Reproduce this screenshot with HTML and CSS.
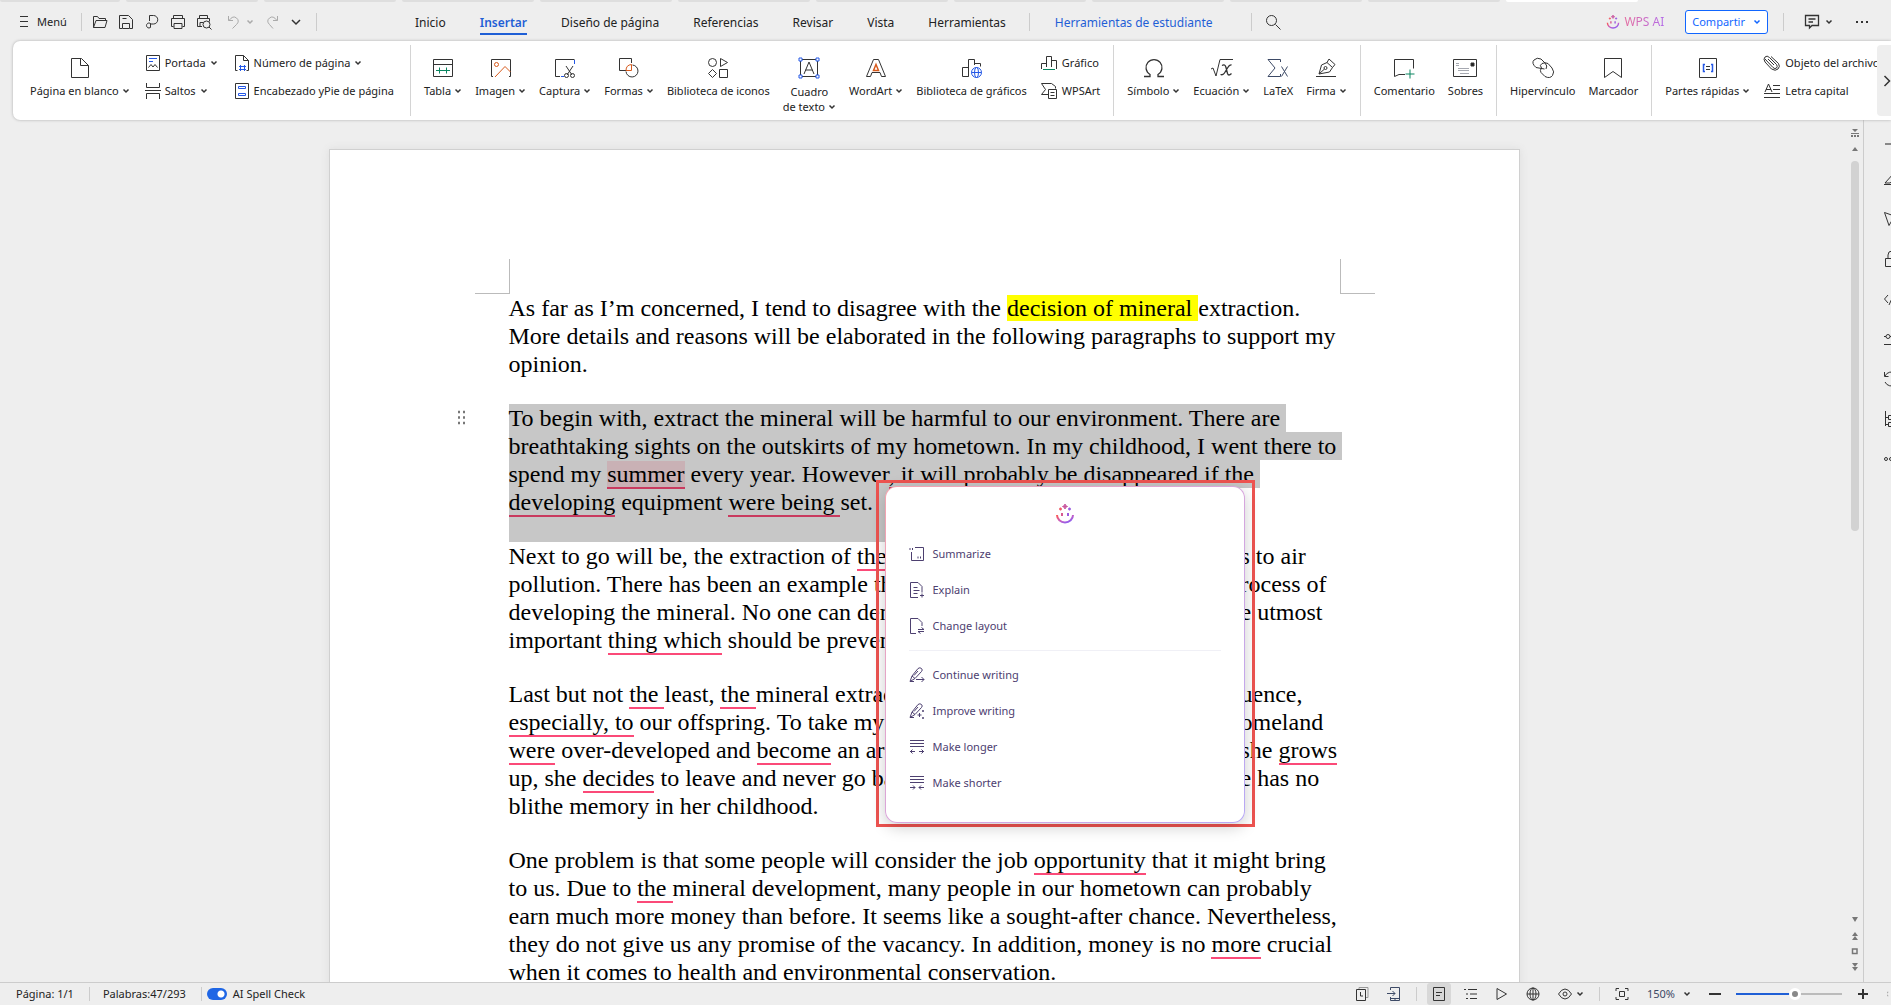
FILE: index.html
```
<!DOCTYPE html>
<html lang="es">
<head>
<meta charset="UTF-8">
<title>WPS Writer</title>
<link rel="stylesheet" href="styles.css">
</head>
<body>
<!-- shared icons -->
<svg class="defs" width="0" height="0">
    <defs>
        <linearGradient id="ai" x1="0" y1="0" x2="1" y2="1">
            <stop offset="0" stop-color="#ff5a4f"/>
            <stop offset=".5" stop-color="#c65fc4"/>
            <stop offset="1" stop-color="#7a5cff"/>
        </linearGradient>
        <symbol id="caret" viewBox="0 0 8 8"><path d="M1.5 2.5L4 5l2.5-2.5" fill="none" stroke="currentColor" stroke-width="1.5"/></symbol>
        <symbol id="smile" viewBox="0 0 20 20">
            <path d="M2 11a8 7.500 0 0 0 16 0" fill="none" stroke="url(#ai)" stroke-width="2"/>
            <path d="M7 9v3" stroke="#d75a90" stroke-width="2"/>
            <path d="M13 9v3" stroke="#9c5ce0" stroke-width="2"/>
            <path d="M10 0l.8 1.700 1.700.8-1.700.8L10 5l-.8-1.700-1.700-.8 1.700-.8z" fill="#c9589f" stroke="#c9589f"/>
            <path d="M5.500 3.500v3M4 5h3" stroke="#f25d68" stroke-width="1.300"/>
            <path d="M14.500 3.500v3M13 5h3" stroke="#9a5fe0" stroke-width="1.300"/>
        </symbol>
        <symbol id="pen" viewBox="0 0 16 16"><path d="M1 14.500l2-5.500 6-7.500q2-1.500 3.500 0t0 3L6 11.500zM3 9l3 2.500M1 14.500h4M5 8.500l4-4.500"/></symbol>
    </defs>
</svg>

<div class="file-tabs">
    <i></i><i></i><i></i><i></i><i></i><i></i><i></i><i></i><i></i><i></i><i></i><i class="on"></i>
</div>

<header class="menubar">
    <div class="quick">
        <button class="menu"><svg width="10" height="12" viewBox="0 0 10 12"><path d="M1 .5h8M1 5.500h8M1 10.500h8"/></svg>Menú</button>
        <span class="sep"></span>
        <button aria-label="Abrir"><svg width="16" height="16" viewBox="0 0 16 16"><path d="M1.500 13.500v-11h4l1.500 2h6.500v2M1.500 13.500l2.500-7h11l-2 7z"/></svg></button>
        <button aria-label="Guardar"><svg width="16" height="16" viewBox="0 0 16 16"><path d="M4 14.500H1.500v-13h9l4 4v9H12M4.500 14.500v-5h7v5zM4.500 4.500h4"/></svg></button>
        <button aria-label="Exportar"><svg width="16" height="16" viewBox="0 0 16 16"><path d="M5.500 7V1.500h4a4 4 0 0 1 0 8.500H7a2.500 2.500 0 1 0-2 4l1.500-.5v-3.500"/></svg></button>
        <button aria-label="Imprimir"><svg width="16" height="16" viewBox="0 0 16 16"><path d="M3.500 4.500v-3h9v3M3.500 12.500h-2v-8h13v8h-2M4 9.500h8v5H4z"/></svg></button>
        <button aria-label="Vista previa"><svg width="16" height="16" viewBox="0 0 16 16"><path d="M3.500 4.500v-3h8v3M6 12.500H1.500v-8h12v3M4 12.500v-4h3"/><circle cx="10.500" cy="10.500" r="3.500"/><path d="M13 13l2.500 2.500"/></svg></button>
        <button class="off undo" aria-label="Deshacer"><svg width="14" height="16" viewBox="0 0 14 16"><path d="M2.500 2v4.500h4.500M3 6.500Q7 1 10.500 4t0 6.500L6.500 14.500"/></svg><svg class="caret"><use href="#caret"/></svg></button>
        <button class="off" aria-label="Rehacer"><svg width="14" height="16" viewBox="0 0 14 16"><path d="M11.500 2v4.500H7M11 6.500Q7 1 3.500 4t0 6.500L7 14.500"/></svg></button>
        <button aria-label="Más"><svg width="12" height="12" viewBox="0 0 12 12"><path d="M2 4l4 4 4-4" stroke-width="1.500"/></svg></button>
        <span class="sep last"></span>
    </div>
    <nav class="tabs">
        <a href="#">Inicio</a>
        <a href="#" class="active">Insertar</a>
        <a href="#">Diseño de página</a>
        <a href="#">Referencias</a>
        <a href="#">Revisar</a>
        <a href="#">Vista</a>
        <a href="#">Herramientas</a>
        <span class="sep"></span>
        <a href="#" class="student">Herramientas de estudiante</a>
        <span class="sep"></span>
        <button aria-label="Buscar"><svg width="18" height="18" viewBox="0 0 18 18"><circle cx="7.500" cy="7.500" r="5"/><path d="M11.500 11.500l5 5"/></svg></button>
    </nav>
    <div class="right">
        <button class="wpsai"><svg width="14" height="14"><use href="#smile"/></svg><span>WPS AI</span></button>
        <button class="share">Compartir <svg class="caret"><use href="#caret"/></svg></button>
        <span class="sep"></span>
        <button class="comments" aria-label="Comentarios"><svg width="16" height="16" viewBox="0 0 16 16"><path d="M1.500 1.500h13v10H8l-2.500 2.500v-2.500h-4zM4.500 5h7M4.500 8h4.500" stroke-width="1.300"/></svg><svg class="caret"><use href="#caret"/></svg></button>
        <button aria-label="Más opciones"><svg width="14" height="4" viewBox="0 0 14 4"><path d="M1 2h2M6 2h2M11 2h2" stroke-width="2"/></svg></button>
    </div>
</header>

<section class="ribbon">
    <button class="big"><svg width="24" height="24" viewBox="0 0 24 24"><path d="M3.500 2.500h10l7 7v12h-17zM12.500 2.500v7h8"/></svg><span>Página en blanco<svg class="caret"><use href="#caret"/></svg></span></button>
    <div class="stack">
        <button><svg width="16" height="18" viewBox="0 0 16 18"><path d="M1.500 1.500h13v15h-13z"/><path class="blue" d="M4 4.500h8M4 7.500h4"/><path d="M3.500 13.500l2.500-3 2 2.500 2-2.500 2.500 3"/></svg>Portada<svg class="caret"><use href="#caret"/></svg></button>
        <button><svg width="16" height="18" viewBox="0 0 16 18"><path d="M1.500 1v4.500h13V1M0 8.500h16M1.500 17v-5.500h13V17"/></svg>Saltos<svg class="caret"><use href="#caret"/></svg></button>
    </div>
    <div class="stack">
        <button><svg width="16" height="18" viewBox="0 0 16 18"><path d="M3.500 16.500h-2v-15h8l5 5v10h-2M9.500 1.500v5h5"/><path class="blue" d="M6.500 11v6M10.500 11v6M5 12.500h7M5 15.500h7"/></svg>Número de página<svg class="caret"><use href="#caret"/></svg></button>
        <button><svg width="16" height="18" viewBox="0 0 16 18"><path d="M1.500 1.500h13v15h-13z"/><path class="blue" d="M4.500 4.500h7v2h-7zM4.500 11.500h7v2h-7z"/></svg>Encabezado yPie de página</button>
    </div>
    <span class="bar"></span>

    <button class="big"><svg width="24" height="24" viewBox="0 0 24 24"><path d="M2.500 3.500h19v17h-19zM2.500 8.500h19"/><path class="green" d="M5 14.500h14M8.500 11.500v6M15.500 11.500v6"/></svg><span>Tabla<svg class="caret"><use href="#caret"/></svg></span></button>
    <button class="big"><svg width="24" height="24" viewBox="0 0 24 24"><path d="M4 20.500H2.500v-17h19v17H20"/><circle class="orange" cx="7.500" cy="8.500" r="2"/><path class="orange" d="M6 21l10-10.500 5.500 5.500"/></svg><span>Imagen<svg class="caret"><use href="#caret"/></svg></span></button>
    <button class="big"><svg width="24" height="24" viewBox="0 0 24 24"><path d="M7 20.500H2.500v-17h19M13 10l6 9M20 10l-6 9"/><path class="blue" d="M21.500 4v4M8 20.500h3"/><circle cx="13.500" cy="19.500" r="2"/><circle cx="19.500" cy="19.500" r="2"/></svg><span>Captura<svg class="caret"><use href="#caret"/></svg></span></button>
    <button class="big"><svg width="24" height="24" viewBox="0 0 24 24"><path d="M9 14.500H2.500v-12h12V7"/><path d="M15.500 9a6 6 0 1 1-6.500 6.500"/><path class="orange" d="M14.500 8.500v6H9q0-5.500 5.500-6z"/></svg><span>Formas<svg class="caret"><use href="#caret"/></svg></span></button>
    <button class="big"><svg width="24" height="24" viewBox="0 0 24 24"><circle cx="6.500" cy="6.500" r="4"/><path d="M14.500 2.500v8l7-4zM6.500 13.500l4 4-4 4-4-4zM13.500 13.500h8v8h-8z"/></svg><span>Biblioteca de iconos</span></button>
    <button class="big two"><svg width="24" height="24" viewBox="0 0 24 24"><path d="M5 3.500h14M5 20.500h14M3.500 5v14M20.500 5v14M7 18l5-12 5 12M8.500 14h7"/><path class="blue" d="M2 2h3v3H2zM19 2h3v3h-3zM2 19h3v3H2zM19 19h3v3h-3z"/></svg><span>Cuadro<br>de texto<svg class="caret"><use href="#caret"/></svg></span></button>
    <button class="big"><svg width="24" height="24" viewBox="0 0 24 24"><path d="M2.500 20.500l7-17h5l7 17h-4l-1.500-4H8l-1.500 4z"/><path class="orange" d="M12 8.500l2.500 6h-5z" stroke-width="1.500"/></svg><span>WordArt<svg class="caret"><use href="#caret"/></svg></span></button>
    <button class="big"><svg width="24" height="24" viewBox="0 0 24 24"><path d="M8.500 20.500h-6v-9h6zM8.500 20.500v-17h6V9M14.500 7.500h6v3"/><g class="blue"><circle cx="16.500" cy="16.500" r="5"/><ellipse cx="16.500" cy="16.500" rx="2" ry="5"/><path d="M11.500 16.500h10"/></g></svg><span>Biblioteca de gráficos</span></button>
    <div class="stack charts">
        <button><svg width="18" height="18" viewBox="0 0 18 18"><path d="M1.500 15V9.500h5M6.500 13V2.500h5V13M11.500 6.500h5V15"/><path class="green" d="M3 15.500h12"/></svg>Gráfico</button>
        <button><svg width="18" height="18" viewBox="0 0 18 18"><path d="M8 12.500H1.500l4-5-4-6h10l4 3v2M8.500 7.500h8v9h-8zM10.500 10.500h4M10.500 13.500h4"/></svg>WPSArt</button>
    </div>
    <span class="bar"></span>

    <button class="big"><svg width="24" height="24" viewBox="0 0 24 24"><path d="M2 20.500h6v-2a8 8 0 1 1 8 0v2h6" stroke-width="1.300"/></svg><span>Símbolo<svg class="caret"><use href="#caret"/></svg></span></button>
    <button class="big"><svg width="24" height="24" viewBox="0 0 24 24"><path d="M1 13l2-1 3 8 4-16.500h13"/><path d="M12 9.500q3-2 4 2l1.500 6q1 3 4 0M21.500 9q-2-.5-4 3l-3 5q-1.500 2.500-4 1.500" stroke-width="1.300"/></svg><span>Ecuación<svg class="caret"><use href="#caret"/></svg></span></button>
    <button class="big"><svg width="24" height="24" viewBox="0 0 24 24"><path d="M14.500 6V3.500H2l7 8.500-7 8.500h12.500V18M15.500 10.500l6 10M21.500 10.500l-6 10" stroke="#3d4a66"/></svg><span>LaTeX</span></button>
    <button class="big"><svg width="24" height="24" viewBox="0 0 24 24"><path d="M2 20.500h20M5 18l2.500-9 5.500-2.500 5.500 5L15.500 16zM5 18l5.500-5M13 6.500l2-3.500 6 5.500-2.500 3"/><circle cx="11.500" cy="12" r="1.500"/></svg><span>Firma<svg class="caret"><use href="#caret"/></svg></span></button>
    <span class="bar"></span>

    <button class="big"><svg width="24" height="24" viewBox="0 0 24 24"><path d="M13 18.500H7l-4.500 2v-17h19v9"/><path class="green" d="M18 13.500v9M13.500 18h9"/></svg><span>Comentario</span></button>
    <button class="big"><svg width="26" height="24" viewBox="0 0 26 24"><path d="M1.500 3.500h23v17h-23z"/><path d="M4 7.500h3M4 9.500h3M6 12.500h11M6 14.500h11M8 17.500h9" stroke="#a5a8b0"/><path d="M19 7h3v3h-3z" fill="#222"/></svg><span>Sobres</span></button>
    <span class="bar"></span>

    <button class="big"><svg width="24" height="24" viewBox="0 0 24 24"><path d="M13.500 13L5 11.500Q0 7 3 4t7-1l4 4q3 3 1 6M10.500 12Q8 9 11 7.500t6 0l4 4.500q3 4 .5 7.500t-7.500 1l-4-4q-1.500-2 .5-4.500"/></svg><span>Hipervínculo</span></button>
    <button class="big"><svg width="24" height="24" viewBox="0 0 24 24"><path d="M3.500 2.500h17v19L12 15.500l-8.500 6z"/></svg><span>Marcador</span></button>
    <span class="bar"></span>

    <button class="big"><svg width="24" height="24" viewBox="0 0 24 24"><path d="M3.500 2.500h17v19h-17z"/><path class="blue" d="M9 8.500H7.500v7H9M15 8.500h1.500v7H15" stroke-width="1.500"/><path d="M10 10.500h4M10 13.500h4"/></svg><span>Partes rápidas<svg class="caret"><use href="#caret"/></svg></span></button>
    <div class="stack cut">
        <button><svg width="18" height="18" viewBox="0 0 18 18"><path d="M2 5l8 8.500q2 2 3.500.5t0-3.500L6.500 3.500Q4 1 2 3t0 5l6.500 7q4 2.500 6.500 0t.5-5.500L8 2.500M5 5l6 6"/></svg>Objeto del archivo</button>
        <button><svg width="18" height="18" viewBox="0 0 18 18"><path d="M2 10l3.500-8L9 10M3 7.500h5M10 3.500h7M10 7.500h7M1 11.500h16M1 15.500h16"/></svg>Letra capital</button>
    </div>
    <button class="scroll-right" aria-label="Más herramientas"><svg width="8" height="12" viewBox="0 0 8 12"><path d="M1.500 1L6.500 6l-5 5" stroke-width="1.500"/></svg></button>
</section>

<main class="work">
    <div class="canvas">
        <article class="page">
            <div class="corners"><i></i><i></i></div>
            <p>
                <span class="line">As far as I’m concerned, I tend to disagree with the <mark>decision of mineral </mark>extraction.</span>
                <span class="line">More details and reasons will be elaborated in the following paragraphs to support my</span>
                <span class="line">opinion.</span>
            </p>
            <p class="selected">
                <button class="grip" aria-label="Mover párrafo"><svg width="10" height="16" viewBox="0 0 10 16"><path d="M1 2h2M6 2h2M1 7.500h2M6 7.500h2M1 13h2M6 13h2" stroke-width="2.500"/></svg></button>
                <span class="line">To begin with, extract the mineral will be harmful to our environment. There are </span>
                <span class="line">breathtaking sights on the outskirts of my hometown. In my childhood, I went there to </span>
                <span class="line">spend my <u class="word">summer</u> every year. However<u>, it</u> will probably <u>be disappeared if</u> the </span>
                <span class="line end"><u>developing</u> equipment <u>were being </u>set.</span>
            </p>
            <p>
                <span class="line split"><span>Next to go will be, the extraction of <u>the mineral</u></span><span>s to air</span></span>
                <span class="line split"><span>pollution. There has been an example that</span><span>rocess of</span></span>
                <span class="line split"><span>developing the mineral. No one can deny</span><span>e utmost</span></span>
                <span class="line">important <u>thing which</u> should be prevented.</span>
            </p>
            <p>
                <span class="line split"><span>Last but not <u>the </u>least, <u>the </u>mineral extraction</span><span>uence,</span></span>
                <span class="line split"><span><u>especially, to</u> our offspring. To take my</span><span>omeland</span></span>
                <span class="line split"><span><u>were</u> over-developed and <u>become</u> an area</span><span>she <u>grows</u></span></span>
                <span class="line split"><span>up, she <u>decides</u> to leave and never go back</span><span>e has no</span></span>
                <span class="line">blithe memory in her childhood.</span>
            </p>
            <p>
                <span class="line">One problem is that some people will consider the job <u>opportunity</u> that it might bring</span>
                <span class="line">to us. Due to <u>the </u>mineral development, many people in our hometown can probably</span>
                <span class="line">earn much more money than before. It seems like a sought-after chance. Nevertheless,</span>
                <span class="line">they do not give us any promise of the vacancy. In addition, money is no <u>more</u> crucial</span>
                <span class="line">when it comes to health and environmental conservation.</span>
            </p>

            <div class="frame">
                <div class="ai-menu">
                    <svg class="logo" width="20" height="20"><use href="#smile"/></svg>
                    <button><svg width="16" height="16" viewBox="0 0 16 16"><path d="M6 1.500h8.500v13h-12V6M1 2v2M3.500 2v2M9 10.500v2M11.500 10.500v2"/></svg>Summarize</button>
                    <button><svg width="16" height="16" viewBox="0 0 16 16"><path d="M9 15.500H1.500V.5H9l4 4v6M4.500 5.500h4M4.500 8.500h6M4.500 11.500h4M13 11.500v4M11 13.500h4"/></svg>Explain</button>
                    <button><svg width="16" height="16" viewBox="0 0 16 16"><path d="M7 15.500H1.500V.5H9l4 4V8M9 11.500h6L12.500 9.500M15 13.500H9l2.500 2"/></svg>Change layout</button>
                    <hr>
                    <button><svg width="16" height="16" viewBox="0 0 16 16"><use href="#pen"/><path d="M7 12.500h8M12.500 10l2.500 2.500-2.500 2.500"/></svg>Continue writing</button>
                    <button><svg width="16" height="16" viewBox="0 0 16 16"><use href="#pen"/><path d="M10.500 10v4M8.500 12h4M14 7v2M13 8h2M14 14v2M13 15h2"/></svg>Improve writing</button>
                    <button><svg width="16" height="16" viewBox="0 0 16 16"><path d="M1 1.500h14M1 4.500h14M1 7.500h14M1 12.500h5M10 12.500h5M3.500 10.500l-2 2 2 2M12.500 10.500l2 2-2 2"/></svg>Make longer</button>
                    <button><svg width="16" height="16" viewBox="0 0 16 16"><path d="M1 1.500h14M1 4.500h14M1 7.500h14M1 12.500h5M10 12.500h5M4 10.500l2 2-2 2M12 10.500l-2 2 2 2"/></svg>Make shorter</button>
                </div>
            </div>
        </article>
    </div>
    <div class="scroller">
        <svg width="8" height="24" viewBox="0 0 8 24"><path d="M1 0h6L4 3zM0 4h8v1H0zM0 6h2v2H0zM3 6h2v2H3zM6 6h2v2H6zM4 18l3 4H1z"/></svg>
        <i class="thumb"></i>
        <svg class="bottom" width="8" height="56" viewBox="0 0 8 56"><path d="M1 0h6L4 5zM4 15l3 4H1zM4 19l3 4H1zM1 46h6L4 50zM1 50h6L4 54z"/><path d="M1.500 32h4.500v4.500H1.500z" fill="none" stroke="#777" stroke-width="1.500"/></svg>
    </div>
    <aside class="side">
        <svg width="16" height="6" viewBox="0 0 16 6"><path d="M1 3h14" stroke="#888" stroke-width="2"/></svg>
        <svg width="16" height="16" viewBox="0 0 16 16"><path d="M0 13.500h16M1 12L10 2l4 4-8 6z"/></svg>
        <svg width="16" height="16" viewBox="0 0 16 16"><path d="M.5 1.500l14 5-6 2-3.500 6z"/></svg>
        <svg width="16" height="16" viewBox="0 0 16 16"><path d="M1.500 7.500h13v8h-13zM4 7V4a4 4 0 0 1 8 0v3"/></svg>
        <svg width="16" height="16" viewBox="0 0 16 16"><path d="M4 4L.5 8 4 12M10 3L5 14M12 4l3.500 4-3.500 4"/></svg>
        <svg width="16" height="16" viewBox="0 0 16 16"><path d="M0 5.500h2M6 5.500h10M0 13.500h16"/><circle cx="4" cy="5.500" r="2"/></svg>
        <svg width="16" height="16" viewBox="0 0 16 16"><path d="M.5 1v4.500h4M1 5a7 7 0 1 1 0 6"/></svg>
        <svg width="16" height="16" viewBox="0 0 16 16"><path d="M1.500 0v15M1.500 6.500h3M1.500 13.500h3M4.500 4.500h8v4h-8zM4.500 11.500h8v4h-8z"/></svg>
        <svg width="16" height="16" viewBox="0 0 16 16"><circle cx="2" cy="8" r="1.500"/><circle cx="7" cy="8" r="1.500"/><circle cx="12" cy="8" r="1.500"/></svg>
    </aside>
</main>

<footer class="status">
    <span class="page-no">Página: 1/1</span>
    <span class="sep"></span>
    <span class="words">Palabras:47/293</span>
    <span class="sep"></span>
    <label><input type="checkbox" class="switch" checked>AI Spell Check</label>
    <div class="views">
        <button aria-label="Historial"><svg width="14" height="14" viewBox="0 0 14 14"><path d="M4 2.500v-2h9v10h-2" stroke="#999"/><path d="M1.500 2.500h9v11h-9zM5.500 5v4H8"/></svg></button>
        <button class="phone" aria-label="Enviar a móvil"><svg width="14" height="16" viewBox="0 0 14 16"><path d="M3.500 4V1.500h9v13h-9V11M0 7.500h8M5.500 5L8 7.500 5.500 10M3.500 12.500h9M7 14h2" stroke="#3d4a66"/></svg></button>
        <span class="sep"></span>
        <button class="on" aria-label="Página"><svg width="12" height="14" viewBox="0 0 12 14"><path d="M.5.5h11v13H.5zM3 5.500h6M3 8.500h4"/></svg></button>
        <button aria-label="Esquema"><svg width="14" height="12" viewBox="0 0 14 12"><path d="M0 1.500h2M4 1.500h9M2 6h2M6 6h7M2 10.500h2M6 10.500h7"/></svg></button>
        <button aria-label="Reproducir"><svg width="12" height="14" viewBox="0 0 12 14"><path d="M1 1.500l9.500 5.500L1 12.500z"/></svg></button>
        <button aria-label="Web"><svg width="14" height="14" viewBox="0 0 14 14"><circle cx="7" cy="7" r="6"/><ellipse cx="7" cy="7" rx="3" ry="6"/><path d="M1 7h12M7 1v12"/></svg></button>
        <button class="eye" aria-label="Protección"><svg width="14" height="12" viewBox="0 0 14 12"><path d="M.5 6Q3.500 1 7 1t6.500 5Q10.500 11 7 11T.5 6z"/><circle cx="7" cy="6" r="2"/></svg><svg class="caret"><use href="#caret"/></svg></button>
        <span class="sep"></span>
        <button aria-label="Ajustar"><svg width="14" height="14" viewBox="0 0 14 14"><path d="M1 4V1.500h3M10 1.500h3V4M13 10v2.500h-3M4 12.500H1V10M4.500 4.500h5v5h-5z"/></svg></button>
        <button class="zoom">150%<svg class="caret"><use href="#caret"/></svg></button>
        <button aria-label="Reducir"><svg width="12" height="12" viewBox="0 0 12 12"><path d="M0 6h12" stroke-width="2"/></svg></button>
        <input type="range" min="0" max="100" value="56" aria-label="Zoom">
        <button aria-label="Ampliar"><svg width="12" height="12" viewBox="0 0 12 12"><path d="M1 6h10M6 1v10" stroke-width="2"/></svg></button>
    </div>
    <svg class="expand" width="12" height="14" viewBox="0 0 12 14"><path d="M4 1.500H1V5M4 12.500H1V9"/></svg>
</footer>
</body>
</html>
```
FILE: styles.css
```
* {
	box-sizing: border-box;
	margin: 0;
	padding: 0;
}
body {
	display: flex;
	flex-direction: column;
	height: 100vh;
	overflow: hidden;
	background: #eee;
	color: #222;
	font: 11px/14px "Noto Sans", "Open Sans", sans-serif;
}
a {
	color: inherit;
	text-decoration: none;
}
button {
	display: flex;
	align-items: center;
	border: 0;
	background: none;
	color: inherit;
	font: inherit;
	white-space: nowrap;
	cursor: pointer;
}
svg {
	flex: none;
	fill: none;
	stroke: #333;
}
.defs {
	position: absolute;
}
.caret {
	width: 8px;
	height: 8px;
	color: #333;
	stroke: none;
}
.blue { stroke: #2458e6; }
.green { stroke: #0a8560; }
.orange { stroke: #d75a1c; }
.sep {
	flex: none;
	width: 1px;
	height: 18px;
	background: #ccc;
}

/* window tabs */
.file-tabs {
	display: flex;
	flex: none;
	gap: 6px;
	height: 2px;
}
.file-tabs i {
	flex: none;
	width: 132px;
	border-radius: 0 0 4px 4px;
	background: #dedede;
}
.file-tabs i:first-child {
	width: 120px;
}
.file-tabs .on {
	background: #fff;
}

/* menu row */
.menubar {
	display: flex;
	flex: none;
	align-items: center;
	height: 39px;
	font-size: 12px;
}
.quick {
	display: flex;
	align-items: center;
	gap: 10px;
	width: 404px;
	padding-left: 19px;
}
.quick .menu {
	gap: 8px;
	width: 52px;
	font-size: 11px;
}
.quick .off svg {
	stroke: #aaa;
}
.quick .off .caret {
	color: #aaa;
	stroke: none;
}
.quick .undo {
	gap: 6px;
	margin: 0 2px 0 4px;
}
.quick .last {
	margin-left: 4px;
}
.tabs {
	display: flex;
	align-items: center;
	height: 100%;
	padding-left: 11px;
}
.tabs a {
	margin-right: 34px;
	padding: 7px 0 3px;
	border-bottom: 2px solid transparent;
}
.tabs .active {
	border-color: #1f5fd6;
	color: #1f5fd6;
	font-weight: 600;
}
.tabs .sep {
	margin: 0 25px 0 -11px;
}
.tabs .student {
	color: #1f5fd6;
}
.tabs .student + .sep {
	margin: 0 12px 0 4px;
}
.right {
	display: flex;
	align-items: center;
	margin-left: auto;
	padding-right: 22px;
}
.wpsai {
	gap: 4px;
	margin-right: 21px;
}
.wpsai span {
	background: linear-gradient(90deg, #e46a9e, #b36ae8);
	-webkit-background-clip: text;
	background-clip: text;
	color: transparent;
}
.share {
	gap: 8px;
	height: 24px;
	padding: 0 6px 0 6px;
	border: 1px solid #1166ff;
	border-radius: 3px;
	background: #fff;
	color: #1166ff;
	font-size: 11px;
}
.share .caret {
	color: #1166ff;
}
.right .sep {
	margin: 0 20px 0 15px;
}
.comments {
	gap: 5px;
	margin-right: 22px;
}

/* ribbon */
.ribbon {
	display: flex;
	flex: none;
	position: relative;
	z-index: 2;
	height: 79px;
	margin-left: 13px;
	padding: 4px 0 4px 17px;
	overflow: hidden;
	border-radius: 7px 0 0 7px;
	background: #fff;
	box-shadow: 0 0 3px #aaa;
}
.ribbon > * {
	flex: none;
}
.big {
	flex-direction: column;
	gap: 3px;
	margin-right: 13px;
	padding-top: 11px;
}
.big.two {
	gap: 4px;
}
.big > span {
	line-height: 15px;
}
.big .caret, .stack .caret {
	margin-left: 3px;
}
.stack {
	display: flex;
	flex-direction: column;
	gap: 10px;
	margin-right: 16px;
	padding-top: 9px;
}
.big + .stack {
	margin-left: 2px;
}
.big + .charts, .big + .cut {
	margin: 0 13px 0 0;
}
.stack button {
	gap: 4px;
	height: 18px;
}
.stack .caret {
	margin-left: 0;
}
.bar {
	width: 1px;
	margin-right: 13px;
	background: #d4d4d4;
}
.scroll-right {
	position: absolute;
	top: 4px;
	right: 0;
	width: 14px;
	height: 71px;
	padding-left: 6px;
	border-radius: 4px 0 0 4px;
	background: #eee;
}

/* document */
.work {
	display: flex;
	flex: 1;
	min-height: 0;
	overflow: hidden;
}
.canvas {
	flex: 1;
	overflow: hidden;
	padding-top: 29px;
}
.page {
	position: relative;
	width: 1191px;
	min-height: 1600px;
	margin: 0 auto;
	padding: 144px 179px;
	border: 1px solid #d0d0d0;
	background: #fff;
	box-shadow: 0 0 8px #ddd;
	color: #000;
	font: 24px/28px "Liberation Serif", "Times New Roman", serif;
}
.corners i {
	position: absolute;
	top: 109px;
	width: 35px;
	height: 35px;
	border: solid #bbb;
	border-width: 0 1px 1px 0;
}
.corners i:first-child {
	left: 145px;
}
.corners i:last-child {
	right: 144px;
	border-width: 0 0 1px 1px;
}
.page p {
	position: relative;
	margin-bottom: 26px;
}
.line {
	display: block;
	width: fit-content;
	white-space: pre;
}
mark {
	background: #ff0;
	color: inherit;
}
u {
	border-bottom: 2px solid #fb4a78;
	text-decoration: none;
}
.selected .line {
	background: #c7c7c7;
}
.selected u {
	border-color: #c93a5f;
}
.selected .word {
	background: #c9b1b5;
}
.selected .end {
	width: 400px;
	margin-bottom: -26px;
	padding-bottom: 26px;
}
.split {
	display: grid;
	grid-template-columns: 732px auto;
}
.grip {
	position: absolute;
	top: 6px;
	left: -52px;
}
.grip svg {
	stroke: #777;
}

/* AI popup */
.frame {
	position: absolute;
	top: 330px;
	left: 546px;
	width: 379px;
	padding: 3px 7px 1px 6px;
	border: 3px solid #ee5350;
}
.ai-menu {
	display: flex;
	flex-direction: column;
	height: 337px;
	padding: 17px 23px;
	border: 1px solid transparent;
	border-radius: 12px;
	background: linear-gradient(#fff, #fff) padding-box, linear-gradient(135deg, #f5a3ae, #d9a6dc 50%, #b7a8f5) border-box;
	box-shadow: 0 4px 16px rgba(0, 0, 0, .2);
	color: #4d4070;
	font: 11px/16px "Noto Sans", "Open Sans", sans-serif;
}
.ai-menu .logo {
	align-self: center;
	margin-bottom: 12px;
	stroke: none;
}
.ai-menu button {
	gap: 8px;
	height: 36px;
}
.ai-menu button svg {
	stroke: #4d4070;
}
.ai-menu hr {
	margin: 6px 0;
	border: 0;
	border-top: 1px solid #f0f0f6;
}

/* scrollbar and task pane */
.scroller {
	display: flex;
	flex-direction: column;
	align-items: center;
	width: 16px;
	padding: 9px 2px 9px 0;
	border-right: 1px solid #ccc;
}
.scroller svg {
	fill: #777;
	stroke: none;
}
.thumb {
	width: 8px;
	height: 370px;
	margin-top: 8px;
	border-radius: 4px;
	background: #d2d2d2;
}
.scroller .bottom {
	margin-top: auto;
}
.side {
	display: flex;
	flex-direction: column;
	gap: 24px;
	width: 27px;
	padding: 21px 0 0 20px;
	overflow: hidden;
}

/* status bar */
.status {
	display: flex;
	flex: none;
	align-items: center;
	height: 23px;
	padding-left: 16px;
	border-top: 1px solid #ccc;
	background: #eee;
}
.status .sep {
	height: 14px;
	margin: 0 13px 0 15px;
}
.status label {
	display: flex;
	align-items: center;
	gap: 6px;
	margin-left: -8px;
}
.switch {
	width: 20px;
	height: 12px;
	appearance: none;
	border-radius: 6px;
	background: radial-gradient(circle at 14px 6px, #fff 3px, #1f66e5 4px);
}
.views {
	display: flex;
	align-items: center;
	gap: 18px;
	height: 100%;
	margin-left: auto;
}
.views .sep {
	margin: 0 -3px;
}
.views .on {
	height: 100%;
	margin: 0 -5px;
	padding: 0 6px;
	border-radius: 3px;
	background: #d8d8d8;
}
.views .eye {
	gap: 4px;
}
.views .zoom {
	gap: 8px;
	color: #3d4a66;
}
.views input {
	width: 106px;
	height: 12px;
	margin: 0 -3px;
	appearance: none;
	background: linear-gradient(90deg, #1f5fd6 55%, #bbb 55%) center / 100% 2px no-repeat;
}
.views input::-webkit-slider-thumb {
	width: 12px;
	height: 12px;
	appearance: none;
	border: 3px solid #fff;
	border-radius: 6px;
	background: #888;
}
.expand {
	width: 4px;
	margin-left: 18px;
	overflow: hidden;
}
```
